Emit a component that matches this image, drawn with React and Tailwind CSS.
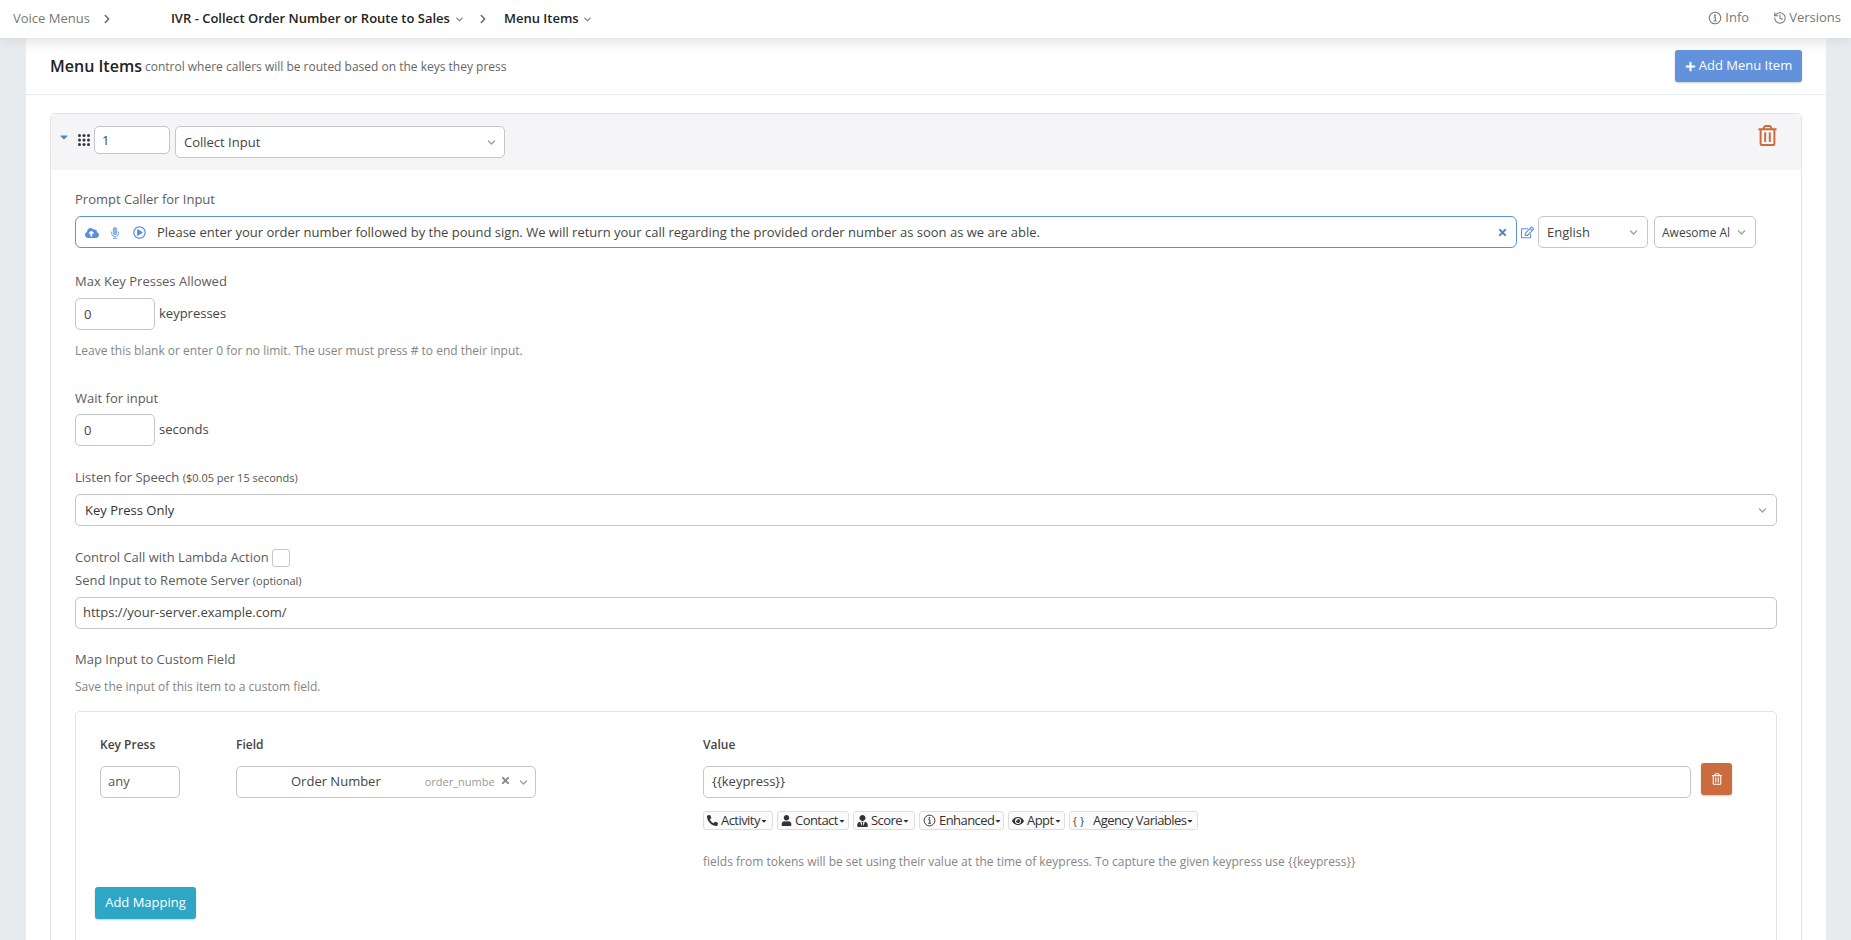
import React from 'react';
import { ChevronDown, ChevronRight, History } from 'lucide-react';
import {
  FaCaretDown, FaCloudUploadAlt, FaMicrophone, FaRegPlayCircle, FaTimes, FaRegEdit, FaRegTrashAlt,
  FaPlus, FaPhoneAlt, FaUser, FaUserTie, FaEye, FaChevronDown,
} from 'react-icons/fa';

const InfoIcon = ({ className }) => (
  <svg viewBox="0 0 16 16" className={className} fill="none" stroke="currentColor">
    <circle cx="8" cy="8" r="6.6" strokeWidth="1.2" />
    <path d="M6.6 7h1.8v4.2M6.4 11.4h3.4" strokeWidth="1.2" />
    <circle cx="8" cy="4.8" r="1" fill="currentColor" stroke="none" />
  </svg>
);

const GridIcon = () => (
  <svg viewBox="0 0 12 12" className="w-[12px] h-[12px] fill-[#333]">
    {[1.5, 6, 10.5].map((y) =>
      [1.5, 6, 10.5].map((x) => <circle key={x + '-' + y} cx={x} cy={y} r="1.5" />)
    )}
  </svg>
);

const Label = ({ className = '', children }) => (
  <div className={`h-[18px] leading-[18px] text-[13px] text-[#5c5c5c] ${className}`}>{children}</div>
);

const Hint = ({ className = '', children }) => (
  <div className={`h-[18px] leading-[18px] text-[12px] text-[#858585] ${className}`}>{children}</div>
);

const Field = ({ className = '', children }) => (
  <div className={`h-[32px] flex items-center border border-[#c6c6c6] rounded-[5px] bg-white text-[13px] text-[#444] ${className}`}>
    {children}
  </div>
);

const SelectChevron = ({ className = '' }) => (
  <FaChevronDown className={`w-[9px] h-[9px] text-[#a3a3a3] shrink-0 ${className}`} />
);

const TokenButton = ({ icon, label, width }) => (
  <div className={`h-[19px] flex items-center gap-[3px] pl-[3px] border border-[#dedede] rounded-[3px] bg-[#fbfbfb] text-[13px] leading-none text-[#333] tracking-[-0.55px] whitespace-nowrap ${width}`}>
    {icon}
    <span>{label}</span>
    <FaCaretDown className="w-[8px] h-[8px] -ml-[3px] shrink-0" />
  </div>
);

const App = () => {
  return (
    <div className="h-[940px] overflow-hidden bg-[#e8ebee] flex flex-col font-['Open_Sans',sans-serif]">
      {/* top bar */}
      <div className="h-[38px] shrink-0 bg-white flex items-center text-[13px] relative z-10 shadow-[0_2px_10px_rgba(0,0,0,0.08)]">
        <span className="ml-[13px] text-[#777]">Voice Menus</span>
        <ChevronRight className="w-[14px] h-[14px] ml-[10px] text-[#666]" strokeWidth={2.5} />
        <span className="ml-[57px] font-semibold text-[#222]">IVR - Collect Order Number or Route to Sales</span>
        <ChevronDown className="w-[11px] h-[11px] ml-[4px] text-[#888]" strokeWidth={3} />
        <ChevronRight className="w-[14px] h-[14px] ml-[11px] text-[#666]" strokeWidth={2.5} />
        <span className="ml-[14px] font-semibold text-[#222]">Menu Items</span>
        <ChevronDown className="w-[11px] h-[11px] ml-[3px] text-[#888]" strokeWidth={3} />
        <div className="ml-auto mr-[10px] flex items-center text-[#777] -mt-[3px]">
          <InfoIcon className="w-[14px] h-[14px]" />
          <span className="ml-[3px]">Info</span>
          <History className="w-[14px] h-[14px] ml-[24px]" strokeWidth={1.8} />
          <span className="ml-[2px]">Versions</span>
        </div>
      </div>

      {/* card */}
      <div className="ml-[26px] w-[1800px] flex-1 bg-white rounded-t-[8px] min-h-0">
        <div className="h-[57px] flex items-center border-b border-[#e6ecf8] pl-[24px] pr-[24px] bg-gradient-to-b from-[#f4f4f4] to-white to-[30%]">
          <span className="text-[16px] font-semibold text-[#222] leading-none">Menu Items</span>
          <span className="ml-[3px] mt-[2px] text-[12px] text-[#666]">control where callers will be routed based on the keys they press</span>
          <div className="ml-auto h-[32px] w-[127px] rounded-[3px] bg-[#6192db] text-white text-[13px] font-medium flex items-center justify-center gap-[3px] shadow-[0_1px_2px_rgba(0,0,0,0.2)]">
            <FaPlus className="w-[11px] h-[11px]" />
            <span>Add Menu Item</span>
          </div>
        </div>

        <div className="ml-[24px] mt-[18px] w-[1752px] border border-[#e4e4e6] rounded-t-[5px]">
          {/* item header */}
          <div className="h-[56px] bg-[#f5f5f7] flex items-start relative pt-[12px]">
            <FaCaretDown className="w-[12px] h-[12px] ml-[7px] mt-[5px] text-[#4a85d8]" />
            <div className="ml-[8px] mt-[8px]"><GridIcon /></div>
            <div className="ml-[4px] w-[76px] h-[28px] flex items-center border border-[#c6c6c6] rounded-[5px] bg-white pl-[7px] pt-[2px] text-[13px] text-[#444]">1</div>
            <Field className="ml-[5px] w-[330px] pl-[8px] pr-[8px] pt-[1px] justify-between">
              <span>Collect Input</span>
              <SelectChevron />
            </Field>
            <FaRegTrashAlt className="absolute right-[24px] top-[11px] w-[19px] h-[21px] text-[#cc6b3e]" />
          </div>

          {/* item body */}
          <div className="pl-[24px] pr-[24px] pt-[20px] pb-[40px]">
            <Label className="mb-[8px]">Prompt Caller for Input</Label>
            <div className="flex items-center">
              <div className="w-[1442px] h-[32px] flex items-center border border-[#5a8fdc] rounded-[6px] bg-white pt-[1px] text-[13px] text-[#444]">
                <FaCloudUploadAlt className="ml-[9px] w-[14px] h-[14px] text-[#5a8fdc]" />
                <FaMicrophone className="ml-[10px] w-[12px] h-[12px] text-[#8fb2e6]" />
                <FaRegPlayCircle className="ml-[12px] w-[13px] h-[13px] text-[#5a8fdc]" />
                <span className="ml-[11px] whitespace-nowrap">Please enter your order number followed by the pound sign. We will return your call regarding the provided order number as soon as we are able.</span>
                <FaTimes className="ml-auto mr-[8px] w-[11px] h-[11px] text-[#4f86d6]" />
              </div>
              <FaRegEdit className="ml-[4px] w-[13px] h-[13px] text-[#5a8fdc]" />
              <Field className="ml-[4px] w-[110px] pl-[8px] pr-[9px] pt-[1px] justify-between">
                <span>English</span>
                <SelectChevron />
              </Field>
              <Field className="ml-[6px] w-[102px] pl-[7px] pr-[9px] pt-[1px] justify-between">
                <span className="text-[12px]">Awesome Al</span>
                <SelectChevron />
              </Field>
            </div>

            <Label className="mt-[24px] mb-[8px]">Max Key Presses Allowed</Label>
            <div className="flex items-center">
              <Field className="w-[80px] pl-[8px] pt-[1px]">0</Field>
              <span className="ml-[4px] text-[13px] text-[#444]">keypresses</span>
            </div>
            <Hint className="mt-[12px]">Leave this blank or enter 0 for no limit. The user must press # to end their input.</Hint>

            <Label className="mt-[29px] mb-[7px]">Wait for input</Label>
            <div className="flex items-center">
              <Field className="w-[80px] pl-[8px] pt-[1px]">0</Field>
              <span className="ml-[4px] text-[13px] text-[#444]">seconds</span>
            </div>

            <Label className="mt-[22px] mb-[8px]">
              Listen for Speech <span className="text-[11px] text-[#555]">($0.05 per 15 seconds)</span>
            </Label>
            <Field className="w-[1702px] pl-[9px] pr-[9px] pt-[1px] justify-between">
              <span className="text-[#333]">Key Press Only</span>
              <SelectChevron />
            </Field>

            <div className="mt-[22px] flex items-center h-[18px]">
              <Label>Control Call with Lambda Action</Label>
              <div className="ml-[3px] mt-[1px] w-[18px] h-[18px] border border-[#c6c6c6] rounded-[3px] bg-white" />
            </div>
            <Label className="mt-[5px] mb-[8px]">
              Send Input to Remote Server <span className="text-[11px] text-[#555]">(optional)</span>
            </Label>
            <Field className="w-[1702px] pl-[7px]">https://your-server.example.com/</Field>

            <Label className="mt-[21px]">Map Input to Custom Field</Label>
            <Hint className="mt-[10px]">Save the input of this item to a custom field.</Hint>

            {/* mapping box */}
            <div className="mt-[15px] w-[1702px] h-[260px] border border-[#e4e4e6] rounded-t-[5px] pt-[24px] pl-[19px]">
              <div className="flex items-start">
                <div className="ml-[5px] w-[136px]">
                  <div className="h-[18px] leading-[18px] text-[12px] font-semibold text-[#444] mb-[12px]">Key Press</div>
                  <Field className="w-[80px] pl-[7px]"><span className="text-[#555]">any</span></Field>
                </div>
                <div className="w-[467px]">
                  <div className="h-[18px] leading-[18px] text-[12px] font-semibold text-[#444] mb-[12px]">Field</div>
                  <Field className="w-[300px]">
                    <span className="ml-[54px] text-[#444]">Order Number</span>
                    <span className="ml-[44px] w-[69px] overflow-hidden whitespace-nowrap text-[11px] text-[#9a9a9a]">order_number</span>
                    <FaTimes className="ml-[6px] -mt-[4px] w-[11px] h-[11px] text-[#8c8c8c]" />
                    <SelectChevron className="ml-[8px]" />
                  </Field>
                </div>
                <div className="w-[988px]">
                  <div className="h-[18px] leading-[18px] text-[12px] font-semibold text-[#444] mb-[12px]">Value</div>
                  <Field className="pl-[8px]">{'{{keypress}}'}</Field>
                  <div className="mt-[13px] flex gap-[4px]">
                    <TokenButton width="w-[70px]" label="Activity" icon={<FaPhoneAlt className="w-[11px] h-[11px]" />} />
                    <TokenButton width="w-[72px]" label="Contact" icon={<FaUser className="w-[11px] h-[11px]" />} />
                    <TokenButton width="w-[62px]" label="Score" icon={<FaUserTie className="w-[11px] h-[12px]" />} />
                    <TokenButton width="w-[85px]" label="Enhanced" icon={<InfoIcon className="w-[13px] h-[13px]" />} />
                    <TokenButton width="w-[57px]" label="Appt" icon={<FaEye className="w-[12px] h-[12px]" />} />
                    <TokenButton width="w-[129px]" label="Agency Variables" icon={<span className="w-[17px] text-[10px] whitespace-pre">{'{  }'}</span>} />
                  </div>
                  <Hint className="mt-[23px]">fields from tokens will be set using their value at the time of keypress. To capture the given keypress use {'{{keypress}}'}</Hint>
                </div>
                <div className="ml-[10px] pt-[27px]">
                  <div className="w-[31px] h-[32px] rounded-[3px] bg-[#cc6b3e] flex items-center justify-center shadow-[0_1px_2px_rgba(0,0,0,0.2)]">
                    <FaRegTrashAlt className="w-[10px] h-[12px] text-white" />
                  </div>
                </div>
              </div>
              <div className="mt-[16px] w-[101px] h-[32px] rounded-[3px] bg-[#2ea7c6] text-white text-[13px] font-medium flex items-center justify-center shadow-[0_1px_2px_rgba(0,0,0,0.2)]">
                Add Mapping
              </div>
            </div>
          </div>
        </div>
      </div>
    </div>
  );
};

export default App;
